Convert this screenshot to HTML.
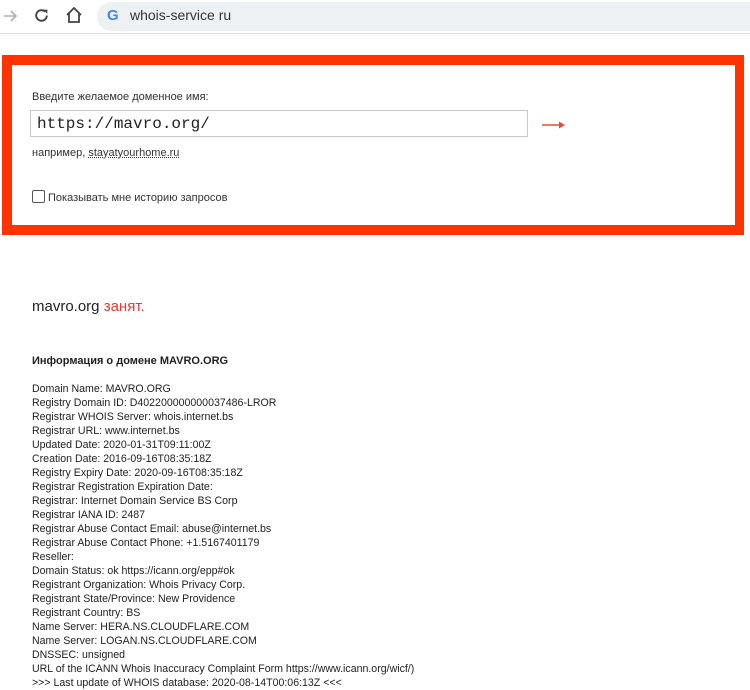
<!DOCTYPE html>
<html><head><meta charset="utf-8"><style>
body{margin:0;width:750px;height:687px;background:#fff;position:relative;overflow:hidden;font-family:"Liberation Sans","DejaVu Sans",sans-serif;color:#222}
.abs{position:absolute}
.bar{left:97px;top:2px;width:680px;height:29px;background:#eef1f4;border-radius:15px}
.sep{left:0;top:33px;width:750px;height:1px;background:#dfe1e4}
.frame{left:2px;top:55px;width:723px;height:160px;border:10px solid #ff3300;border-right-width:9px;background:#fff}
.s{font-size:11px;color:#333}
.input{left:30px;top:110px;width:498px;height:27px;border:1px solid #c8c8c8;font-family:"Liberation Mono",monospace;font-size:16px;line-height:26px;padding-left:6px;box-sizing:border-box;color:#222}
.who{left:32px;top:382px;font-size:10.6px;line-height:14px;color:#222;white-space:pre}
</style></head><body>
<svg class="abs" style="left:2px;top:8px" width="16" height="16" viewBox="0 0 16 16"><path d="M2 8H14M9 3l5 5-5 5" stroke="#b0b0b0" stroke-width="1.6" fill="none"/></svg>
<svg class="abs" style="left:33px;top:7px" width="17" height="17" viewBox="0 0 16 16"><path d="M13 8a5 5 0 1 1-1.5-3.6" stroke="#444" stroke-width="1.8" fill="none"/><path d="M9.5 2.5h4v4z" fill="#444"/></svg>
<svg class="abs" style="left:65px;top:6px" width="18" height="18" viewBox="0 0 18 18"><path d="M2 9L9 2l7 7M4 7.5V16h10V7.5" stroke="#444" stroke-width="1.8" fill="none"/></svg>
<div class="abs bar"></div>
<div class="abs" style="left:107px;top:7px;font-weight:bold;font-size:15px;color:#4285f4">G</div>
<div class="abs" style="left:130px;top:7px;font-size:14px;color:#333">whois-service ru</div>
<div class="abs sep"></div>
<div class="abs frame"></div>
<div class="abs s" style="left:32px;top:91px">Введите желаемое доменное имя:</div>
<div class="abs input">https://mavro.org/</div>
<svg class="abs" style="left:541px;top:119px" width="26" height="12" viewBox="0 0 26 12"><path d="M1 6H22" stroke="#e84a3a" stroke-width="1.5"/><path d="M18 2.5l6 3.5-6 3.5z" fill="#e84a3a"/></svg>
<div class="abs s" style="left:32px;top:147px">например, <span style="text-decoration:underline dotted">stayatyourhome.ru</span></div>
<div class="abs" style="left:32px;top:190px;width:11px;height:11px;border:1px solid #555;border-radius:2px"></div>
<div class="abs s" style="left:48px;top:192px">Показывать мне историю запросов</div>
<div class="abs" style="left:32px;top:298px;font-size:15px;color:#222">mavro.org <span style="color:#e53935">занят.</span></div>
<div class="abs" style="left:32px;top:355px;font-size:11px;font-weight:bold;color:#222">Информация о домене MAVRO.ORG</div>
<div class="abs who">Domain Name: MAVRO.ORG
Registry Domain ID: D402200000000037486-LROR
Registrar WHOIS Server: whois.internet.bs
Registrar URL: www.internet.bs
Updated Date: 2020-01-31T09:11:00Z
Creation Date: 2016-09-16T08:35:18Z
Registry Expiry Date: 2020-09-16T08:35:18Z
Registrar Registration Expiration Date:
Registrar: Internet Domain Service BS Corp
Registrar IANA ID: 2487
Registrar Abuse Contact Email: abuse@internet.bs
Registrar Abuse Contact Phone: +1.5167401179
Reseller:
Domain Status: ok https://icann.org/epp#ok
Registrant Organization: Whois Privacy Corp.
Registrant State/Province: New Providence
Registrant Country: BS
Name Server: HERA.NS.CLOUDFLARE.COM
Name Server: LOGAN.NS.CLOUDFLARE.COM
DNSSEC: unsigned
URL of the ICANN Whois Inaccuracy Complaint Form https://www.icann.org/wicf/)
&gt;&gt;&gt; Last update of WHOIS database: 2020-08-14T00:06:13Z &lt;&lt;&lt;</div>
</body></html>
